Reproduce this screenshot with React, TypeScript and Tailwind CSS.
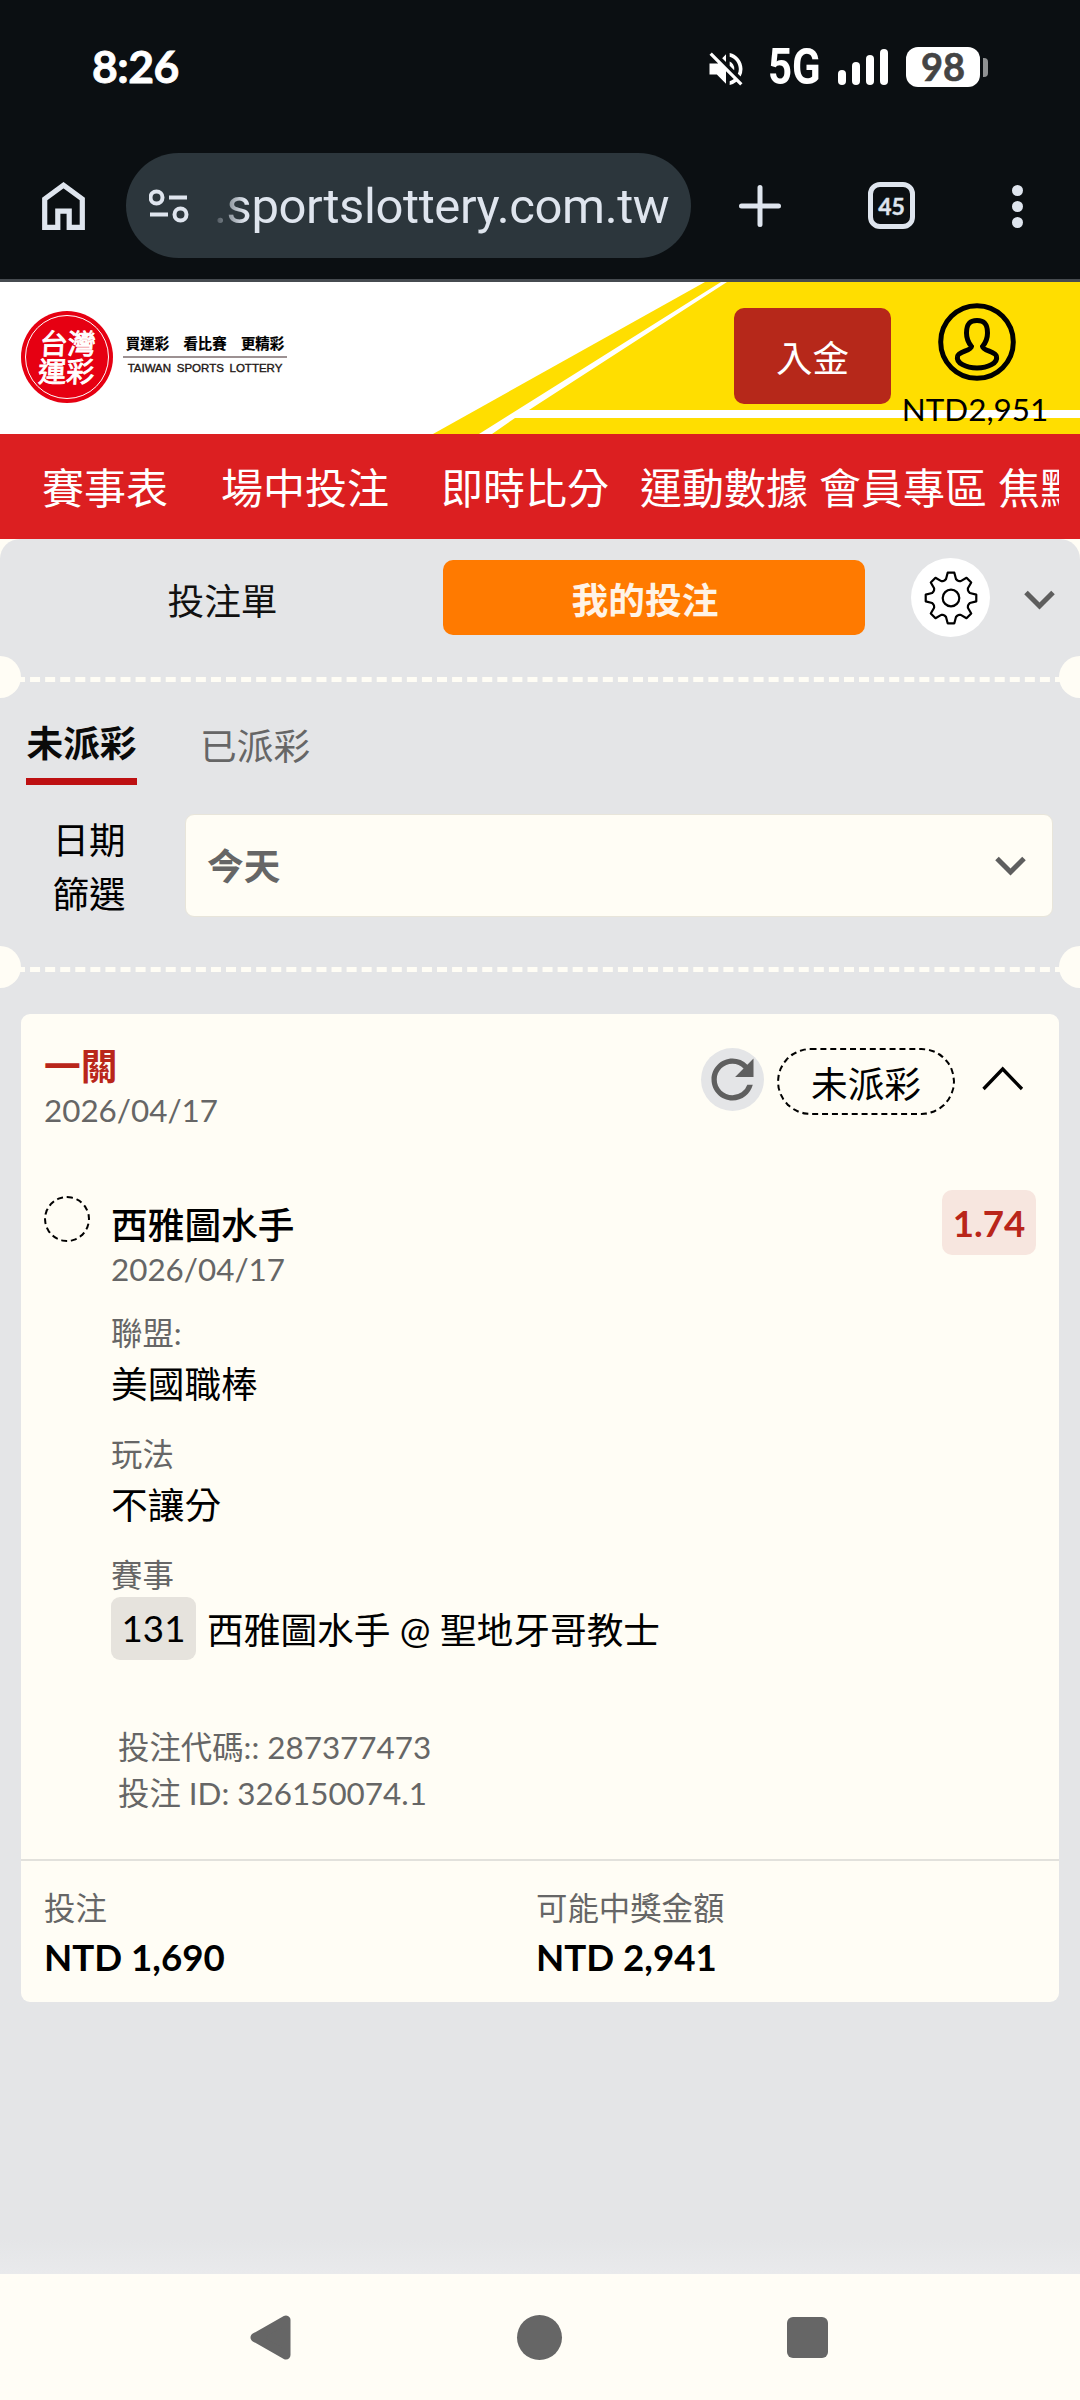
import type { ReactNode } from "react";

import { MdRefresh, MdVolumeOff } from "react-icons/md";

const navItems = [
  { label: "賽事表", className: "ml-[42px]" },
  { label: "場中投注", className: "ml-[53px]" },
  { label: "即時比分", className: "ml-[52px]" },
  { label: "運動數據", className: "ml-[31px]" },
  { label: "會員專區", className: "ml-[11px]" },
  { label: "焦點", className: "ml-[11px]" },
];

const StatusBar = () => (
  <div className="flex h-[134px] items-center pl-[92px] text-white">
    <span className="w-[617px] pb-[4px] text-[44.500px] leading-[45px] font-bold tracking-[-0.5px] [-webkit-text-stroke:0.8px_white]">
      8:26
    </span>
    <MdVolumeOff className="-ml-[5px] mt-[4px] size-[44px]" />
    <span className="ml-[20px] w-[70px] origin-left scale-x-[0.84] font-['Roboto',sans-serif] text-[50px] leading-[50px] font-bold">
      5G
    </span>
    <div className="mr-[18px] flex h-[36px] items-end gap-[6px]">
      <i className="h-[15px] w-[8px] rounded-full bg-white" />
      <i className="h-[23px] w-[8px] rounded-full bg-white" />
      <i className="h-[30px] w-[8px] rounded-full bg-white" />
      <i className="h-[36px] w-[8px] rounded-full bg-white" />
    </div>
    <div className="flex h-[40px] w-[74px] items-center justify-center rounded-[12px] bg-white pb-[2px] text-[38px] leading-[38px] font-bold text-[#444] [-webkit-text-stroke:0.6px_#444]">
      98
    </div>
    <i className="ml-[3px] h-[19px] w-[5px] rounded-r-[4px] bg-[#8f9192]" />
  </div>
);

const BrowserBar = () => (
  <div className="flex h-[148px] items-start border-b-[3px] border-[#464b50] pt-[19px] text-[#dfe5ee]">
    <svg className="mt-[29px] ml-[42px] h-[48px] w-[43px]" viewBox="0 0 43 48">
      <path
        d="M2.7 45.3V17L21.5 3.2 40.3 17V45.3H27.2V29.2H15.8V45.3Z"
        fill="none"
        stroke="currentColor"
        strokeWidth="5.2"
      />
    </svg>
    <div className="ml-[41px] flex h-[105px] w-[565px] items-center rounded-full bg-[#2c363c] pl-[23px]">
      <svg
        className="h-[34px] w-[40px]"
        viewBox="0 0 40 34"
        fill="none"
        stroke="currentColor"
        strokeWidth="4"
      >
        <circle cx="7.5" cy="8.5" r="6" />
        <path d="M20 8.5h18M1 25.500h18" />
        <circle cx="31.500" cy="25.500" r="6" />
      </svg>
      <span className="mt-[3px] ml-[20px] [mask-image:linear-gradient(to_right,transparent,black_36px)] pl-[5px] font-['Roboto',sans-serif] text-[49px] leading-[60px] tracking-[-0.4px] whitespace-nowrap">
        .sportslottery.com.tw
      </span>
    </div>
    <svg
      className="mt-[32px] ml-[48px] size-[42px]"
      viewBox="0 0 42 42"
      stroke="currentColor"
      strokeWidth="5"
      strokeLinecap="round"
    >
      <path d="M21 2.500v37M2.500 21h37" />
    </svg>
    <div className="mt-[29px] ml-[87px] flex size-[47px] items-center justify-center rounded-[12px] border-[5px] border-[#dfe5ee] text-[23px] leading-[24px] font-bold [-webkit-text-stroke:0.4px_#dfe5ee]">
      45
    </div>
    <div className="mt-[32px] ml-[97px] flex flex-col gap-[5px]">
      <i className="size-[11px] rounded-full bg-[#dfe5ee]" />
      <i className="size-[11px] rounded-full bg-[#dfe5ee]" />
      <i className="size-[11px] rounded-full bg-[#dfe5ee]" />
    </div>
  </div>
);

const Logo = () => (
  <div className="mt-[29px] ml-[21px] flex">
    <div className="size-[92px] rounded-full bg-[#e60012] p-[4px]">
      <div className="flex size-full items-center justify-center rounded-full border-[1.500px] border-white">
        <div className="-skew-x-3 text-center text-[28px] leading-[27.500px] font-normal text-white [-webkit-text-stroke:0.9px_white]">
          台灣
          <br />
          運彩
        </div>
      </div>
    </div>
    <div className="mt-[22px] ml-[10px] flex w-[164px] flex-col items-center">
      <span className="text-[14.400px] leading-[21px] font-bold whitespace-nowrap text-black [-webkit-text-stroke:0.2px_black]">
        買運彩　看比賽　更精彩
      </span>
      <i className="mt-[2px] h-[2px] w-full bg-[#9c9192]" />
      <span className="mt-[3px] font-['Liberation_Sans',sans-serif] text-[11.500px] leading-[14px] [word-spacing:2.500px] whitespace-nowrap text-[#231815] [-webkit-text-stroke:0.4px_#231815]">
        TAIWAN SPORTS LOTTERY
      </span>
    </div>
  </div>
);

const Header = () => (
  <header className="relative flex h-[152px] bg-white">
    <svg
      className="absolute inset-0"
      width="1080"
      height="152"
      viewBox="0 0 1080 152"
    >
      <path d="M705 0H1080V152H433Z" fill="#ffde00" />
      <path
        d="M721 0H727L529 128H1080V136H515L492 152H479Z"
        fill="#fff"
      />
    </svg>
    <div className="relative flex w-full">
      <Logo />
      <button className="mt-[26px] ml-[447px] h-[96px] w-[157px] rounded-[10px] bg-[#b6281a] pt-[2px] text-[36.500px] leading-[96px] text-white">
        入金
      </button>
      <div className="mt-[21px] ml-[12px] flex w-[144px] flex-col items-center">
        <svg
          className="ml-[4px] size-[78px]"
          viewBox="0 0 78 78"
          fill="none"
          stroke="#000"
          strokeWidth="5"
        >
          <circle cx="39" cy="39" r="36.300" />
          <path d="M39 17.500C31 17.500 28.500 22 28.500 30C28.500 37 31 40.500 33.500 43.500C33 48 20 48.500 19.500 53.500C18 60 28 65 39 65C50 65 60 60 58.500 53.500C58 48.500 45 48 44.500 43.500C47 40.500 49.500 37 49.500 30C49.500 22 47 17.500 39 17.500Z" />
        </svg>
        <span className="mt-[9px] text-[31.400px] leading-[38px] text-black">
          NTD2,951
        </span>
      </div>
    </div>
  </header>
);

const Perforation = () => (
  <div className="relative flex h-[42px] items-center overflow-hidden">
    <i className="-ml-[21px] size-[42px] rounded-full bg-[#fffdf5]" />
    <i className="mt-[5px] -mr-[6px] -ml-[6px] h-[5px] flex-1 border-t-[5px] border-dashed border-[#fffdf5]" />
    <i className="-mr-[21px] size-[42px] rounded-full bg-[#fffdf5]" />
  </div>
);

// Outline of an eight-tooth gear, one group of corners per tooth.
const gearPoints = Array.from({ length: 8 })
  .flatMap((_, i) =>
    [
      [-20, 18.7],
      [-15, 19.5],
      [-7.5, 25.5],
      [7.5, 25.5],
      [15, 19.5],
      [20, 18.7],
    ].map(([offset, radius]) => {
      const angle = ((i * 45 + offset) * Math.PI) / 180;
      return `${27 + radius * Math.sin(angle)},${27 - radius * Math.cos(angle)}`;
    })
  )
  .join(" ");

const ChevronDown = ({ className }: { className: string }) => (
  <svg className={className} width="31" height="20" viewBox="0 0 31 20">
    <path
      d="M2 2.500L15.500 16L29 2.500"
      fill="none"
      stroke="#5e5e5e"
      strokeWidth="5"
    />
  </svg>
);

const SlipTabs = () => (
  <div className="flex h-[117px] items-start">
    <span className="mt-[21px] ml-[21px] w-[403px] text-center text-[36.700px] leading-[82px] text-[#111]">
      投注單
    </span>
    <span className="mt-[21px] ml-[19px] h-[75px] w-[422px] rounded-[10px] bg-[#ff7a00] pr-[18px] text-center text-[36.700px] leading-[80px] font-bold text-[#fff3e6]">
      我的投注
    </span>
    <div className="mt-[19px] ml-[46px] flex size-[79px] items-center justify-center rounded-full bg-white">
      <svg
        className="size-[54px]"
        viewBox="0 0 54 54"
        fill="none"
        stroke="#000"
        strokeWidth="2.200"
        strokeLinejoin="round"
      >
        <polygon points={gearPoints} />
        <circle cx="27" cy="27" r="8.300" />
      </svg>
    </div>
    <ChevronDown className="mt-[51px] ml-[34px]" />
  </div>
);

const Filters = () => (
  <div className="h-[248px] pt-[20px]">
    <div className="flex h-[67px] items-start pl-[26px]">
      <span className="h-[67px] w-[111px] border-b-[7px] border-[#bd1012] text-center text-[36.700px] leading-[50px] font-bold text-[#0a0a0a]">
        未派彩
      </span>
      <span className="ml-[63px] text-[36.700px] leading-[57px] text-[#666]">
        已派彩
      </span>
    </div>
    <div className="mt-[29px] flex">
      <div className="ml-[52px] w-[74px] text-center text-[36.500px] leading-[53.500px] text-black">
        日期
        <br />
        篩選
      </div>
      <div className="ml-[59px] flex h-[103px] w-[868px] items-center rounded-[9px] border border-[#e8e5da] bg-[#fffdf5] pl-[21px]">
        <span className="w-[788px] pt-px text-[36.700px] leading-[50px] font-bold text-[#666]">
          今天
        </span>
        <ChevronDown className="mt-px" />
      </div>
    </div>
  </div>
);

const Field = ({ label, children }: { label: string; children: ReactNode }) => (
  <div className="h-[121px]">
    <div className="text-[31.400px] leading-[44px] text-[#666]">{label}</div>
    <div className="text-[36.700px] leading-[58px] text-black">{children}</div>
  </div>
);

const BetCard = () => (
  <article className="mx-[21px] mt-[26px] h-[988px] rounded-[9px] bg-[#fffdf5]">
    <div className="flex h-[169px] items-start pl-[23px]">
      <div className="mt-[27px] w-[657px]">
        <div className="text-[36.700px] leading-[50px] font-bold text-[#b9261a]">
          一關
        </div>
        <div className="text-[31.400px] leading-[38px] text-[#666]">
          2026/04/17
        </div>
      </div>
      <div className="mt-[34px] flex size-[63px] rounded-full bg-[#e4e5e7]">
        <MdRefresh className="size-[63px] text-[#5f5f5f]" />
      </div>
      <span className="mt-[34px] ml-[13px] h-[67px] w-[178px] rounded-full border-2 border-dashed border-black text-center text-[36.700px] leading-[68px] text-black">
        未派彩
      </span>
      <svg
        className="mt-[52px] ml-[27px]"
        width="42"
        height="25"
        viewBox="0 0 42 25"
      >
        <path
          d="M1.500 23L20.700 3L40 23"
          fill="none"
          stroke="#000"
          strokeWidth="3.300"
        />
      </svg>
    </div>

    <div className="flex h-[676px] items-start pl-[23px]">
      <i className="mt-[13px] size-[46px] rounded-full border-2 border-dashed border-black" />
      <div className="mt-[17px] ml-[21px] w-[831px]">
        <div className="text-[36.700px] leading-[50px] font-medium text-black">
          西雅圖水手
        </div>
        <div className="text-[31.400px] leading-[38px] text-[#666]">
          2026/04/17
        </div>
        <div className="h-[23px]" />
        <Field label="聯盟:">美國職棒</Field>
        <Field label="玩法">不讓分</Field>
        <div className="text-[31.400px] leading-[44px] text-[#666]">賽事</div>
        <div className="flex text-[36.700px] text-black">
          <span className="h-[63px] w-[85px] rounded-[9px] bg-[#e6e3dd] text-center leading-[63px]">
            131
          </span>
          <span className="ml-[11px] leading-[66px]">
            西雅圖水手 @ 聖地牙哥教士
          </span>
        </div>
        <div className="mt-[61px] pl-[7px] text-[31.400px] leading-[46px] text-[#666]">
          <div>投注代碼:: 287377473</div>
          <div>投注 ID: 326150074.1</div>
        </div>
      </div>
      <span className="mt-[7px] h-[65px] w-[94px] rounded-[10px] bg-[#f7e6df] text-center text-[36.700px] leading-[66px] font-bold text-[#b9261a]">
        1.74
      </span>
    </div>

    <div className="flex border-t-2 border-[#e2e1dc] pt-[24px] pl-[23px]">
      <div className="w-[492px]">
        <div className="text-[31.400px] leading-[46px] text-[#666]">投注</div>
        <div className="text-[36.700px] leading-[52px] font-bold text-black">
          NTD 1,690
        </div>
      </div>
      <div>
        <div className="text-[31.400px] leading-[46px] text-[#666]">
          可能中獎金額
        </div>
        <div className="text-[36.700px] leading-[52px] font-bold text-black">
          NTD 2,941
        </div>
      </div>
    </div>
  </article>
);

const SystemNav = () => (
  <div className="flex h-[126px] items-start bg-[#fffdf6] pt-[41px] text-[#666]">
    <svg className="ml-[250px]" width="41" height="45" viewBox="0 0 41 45">
      <path
        d="M5 22.500L36 5V40Z"
        fill="currentColor"
        stroke="currentColor"
        strokeWidth="9"
        strokeLinejoin="round"
      />
    </svg>
    <i className="ml-[226px] size-[45px] rounded-full bg-[#666]" />
    <i className="mt-[2px] ml-[225px] size-[41px] rounded-[6px] bg-[#666]" />
  </div>
);

const App = () => {
  return (
    <div className="flex h-[2400px] w-[1080px] flex-col overflow-hidden bg-[#fffdf5] font-['Lato','Noto_Sans_CJK_TC',sans-serif]">
      <div className="bg-[#0b0f12]">
        <StatusBar />
        <BrowserBar />
      </div>
      <Header />
      <nav className="h-[105px] bg-[#dc1f21] pr-[21px]">
        <div className="flex overflow-hidden text-[42px] leading-[108px] whitespace-nowrap text-white">
          {navItems.map(({ label, className }) => (
            <span key={label} className={`${className} shrink-0`}>
              {label}
            </span>
          ))}
        </div>
      </nav>
      <main className="flex-1 rounded-t-[20px] bg-[linear-gradient(to_bottom,#e4e5e7_1700px,#e9eaec)]">
        <SlipTabs />
        <Perforation />
        <Filters />
        <Perforation />
        <BetCard />
      </main>
      <SystemNav />
    </div>
  );
};

export default App;
